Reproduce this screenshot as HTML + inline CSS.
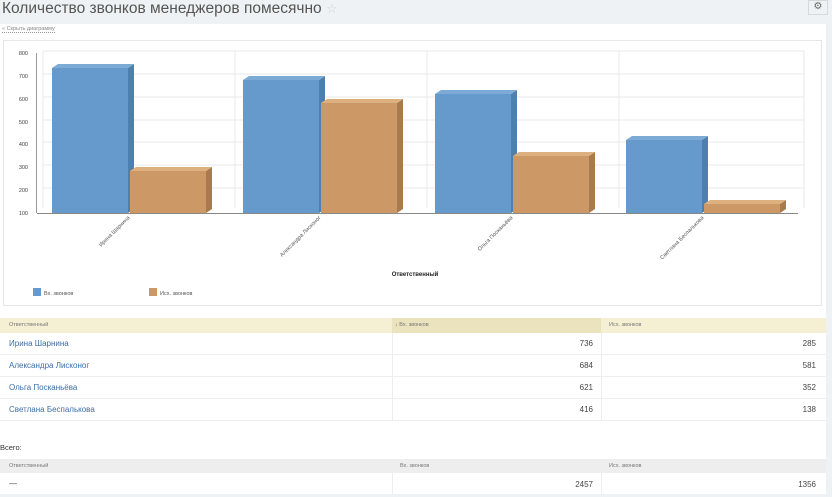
<!DOCTYPE html>
<html><head><meta charset="utf-8"><style>
*{margin:0;padding:0;box-sizing:border-box}
body{width:832px;height:497px;background:#eef2f4;font-family:"Liberation Sans","DejaVu Sans",sans-serif;position:relative;overflow:hidden}
.a{position:absolute}
.t{font-size:5.5px;color:#777}
.n{font-size:8px;color:#3b6ea8}
.v{font-size:8px;color:#444;text-align:right}
</style></head><body>
<div class="a" style="left:2px;top:0;font-size:15.5px;color:#555;line-height:18px">Количество звонков менеджеров помесячно <span style="color:#cfd3d6;font-size:13px">☆</span></div>
<div class="a" style="left:808px;top:0;width:20px;height:15px;border:1px solid #d5d9dc;background:#eef2f4;font-size:10px;color:#666;text-align:center;line-height:12px">⚙</div>
<div class="a" style="left:0;top:24px;width:826px;height:473px;background:#fff"></div>
<div class="a" style="left:2px;top:26px;font-size:5.5px;color:#888;border-bottom:1px dotted #999">« Скрыть диаграмму</div>
<div class="a" style="left:3px;top:40px;width:819px;height:266px;border:1px solid #e6e6e6"></div>
<svg class="a" style="left:0;top:0" width="832" height="310" font-family="Liberation Sans, sans-serif">
<g stroke="#e8e8e8" stroke-width="1" fill="none">
<line x1="43" y1="51" x2="804" y2="51"/><line x1="43" y1="74" x2="804" y2="74"/><line x1="43" y1="97" x2="804" y2="97"/><line x1="43" y1="120" x2="804" y2="120"/><line x1="43" y1="142" x2="804" y2="142"/><line x1="43" y1="165" x2="804" y2="165"/><line x1="43" y1="188" x2="804" y2="188"/>
<line x1="43" y1="51" x2="43" y2="208"/><line x1="235" y1="51" x2="235" y2="208"/><line x1="427" y1="51" x2="427" y2="208"/><line x1="619" y1="51" x2="619" y2="208"/><line x1="804" y1="51" x2="804" y2="208"/>
</g>
<line x1="37" y1="213.5" x2="798" y2="213.5" stroke="#888"/>
<line x1="36.5" y1="53" x2="36.5" y2="213" stroke="#999"/>
<g font-size="5.5" fill="#444" text-anchor="end">
<text x="28" y="55">800</text><text x="28" y="78">700</text><text x="28" y="101">600</text><text x="28" y="124">500</text><text x="28" y="146">400</text><text x="28" y="169">300</text><text x="28" y="192">200</text><text x="28" y="215">100</text>
</g>
<g id="bars">
<!-- blue: front, side, top -->
<g fill="#6699cc"><rect x="52" y="68" width="76" height="145"/><rect x="243" y="80" width="76" height="133"/><rect x="435" y="94" width="76" height="119"/><rect x="626" y="140" width="76" height="73"/></g>
<g fill="#4f7fae"><polygon points="128,68 134,64 134,209 128,213"/><polygon points="319,80 325,76 325,209 319,213"/><polygon points="511,94 517,90 517,209 511,213"/><polygon points="702,140 708,136 708,209 702,213"/></g>
<g fill="#7eaad6"><polygon points="52,68 58,64 134,64 128,68"/><polygon points="243,80 249,76 325,76 319,80"/><polygon points="435,94 441,90 517,90 511,94"/><polygon points="626,140 632,136 708,136 702,140"/></g>
<g fill="#cc9966"><rect x="130" y="171" width="76" height="42"/><rect x="321" y="103" width="76" height="110"/><rect x="513" y="156" width="76" height="57"/><rect x="704" y="204" width="76" height="9"/></g>
<g fill="#a97a4e"><polygon points="206,171 212,167 212,209 206,213"/><polygon points="397,103 403,99 403,209 397,213"/><polygon points="589,156 595,152 595,209 589,213"/><polygon points="780,204 786,200 786,209 780,213"/></g>
<g fill="#ddb07f"><polygon points="130,171 136,167 212,167 206,171"/><polygon points="321,103 327,99 403,99 397,103"/><polygon points="513,156 519,152 595,152 589,156"/><polygon points="704,204 710,200 786,200 780,204"/></g>
</g>
<g font-size="5.5" fill="#555" text-anchor="end">
<text transform="translate(130,218) rotate(-45)">Ирина Шарнина</text>
<text transform="translate(321,218) rotate(-45)">Александра Лисконог</text>
<text transform="translate(513,218) rotate(-45)">Ольга Посканьёва</text>
<text transform="translate(704,218) rotate(-45)">Светлана Беспалькова</text>
</g>
<text x="415" y="276" font-size="6" font-weight="bold" fill="#222" text-anchor="middle">Ответственный</text>
<rect x="33" y="288" width="8" height="8" fill="#6699cc"/><text x="44" y="295" font-size="5.5" fill="#555">Вх. звонков</text>
<rect x="149" y="288" width="8" height="8" fill="#cc9966"/><text x="160" y="295" font-size="5.5" fill="#555">Исх. звонков</text>
</svg>
<!-- table 1 -->
<div class="a" style="left:0;top:318px;width:826px;height:15px;background:#f5f0d4"></div>
<div class="a" style="left:392px;top:318px;width:209px;height:15px;background:#ebe3bd"></div>
<div class="a t" style="left:9px;top:322px">Ответственный</div>
<div class="a t" style="left:395px;top:322px">↓ Вх. звонков</div>
<div class="a t" style="left:609px;top:322px">Исх. звонков</div>
<div class="a" style="left:392px;top:333px;width:1px;height:88px;background:#eee"></div>
<div class="a" style="left:601px;top:333px;width:1px;height:88px;background:#eee"></div>
<div class="a" style="left:0;top:354px;width:826px;height:1px;background:#eee"></div>
<div class="a" style="left:0;top:376px;width:826px;height:1px;background:#eee"></div>
<div class="a" style="left:0;top:398px;width:826px;height:1px;background:#eee"></div>
<div class="a" style="left:0;top:420px;width:826px;height:1px;background:#eee"></div>
<div class="a n" style="left:9px;top:339px">Ирина Шарнина</div>
<div class="a n" style="left:9px;top:361px">Александра Лисконог</div>
<div class="a n" style="left:9px;top:383px">Ольга Посканьёва</div>
<div class="a n" style="left:9px;top:405px">Светлана Беспалькова</div>
<div class="a v" style="left:500px;width:93px;top:339px">736</div><div class="a v" style="left:720px;width:96px;top:339px">285</div>
<div class="a v" style="left:500px;width:93px;top:361px">684</div><div class="a v" style="left:720px;width:96px;top:361px">581</div>
<div class="a v" style="left:500px;width:93px;top:383px">621</div><div class="a v" style="left:720px;width:96px;top:383px">352</div>
<div class="a v" style="left:500px;width:93px;top:405px">416</div><div class="a v" style="left:720px;width:96px;top:405px">138</div>
<div class="a" style="left:0;top:443px;font-size:7.5px;color:#333">Всего:</div>
<div class="a" style="left:0;top:459px;width:826px;height:14px;background:#eeeeee"></div>
<div class="a t" style="left:9px;top:463px">Ответственный</div>
<div class="a t" style="left:400px;top:463px">Вх. звонков</div>
<div class="a t" style="left:609px;top:463px">Исх. звонков</div>
<div class="a" style="left:392px;top:473px;width:1px;height:21px;background:#eee"></div>
<div class="a" style="left:601px;top:473px;width:1px;height:21px;background:#eee"></div>
<div class="a" style="left:9px;top:479px;font-size:8px;color:#444">—</div>
<div class="a v" style="left:500px;width:93px;top:480px">2457</div><div class="a v" style="left:720px;width:96px;top:480px">1356</div>
<div class="a" style="left:0;top:494px;width:826px;height:3px;background:#eef2f4"></div>
</body></html>
